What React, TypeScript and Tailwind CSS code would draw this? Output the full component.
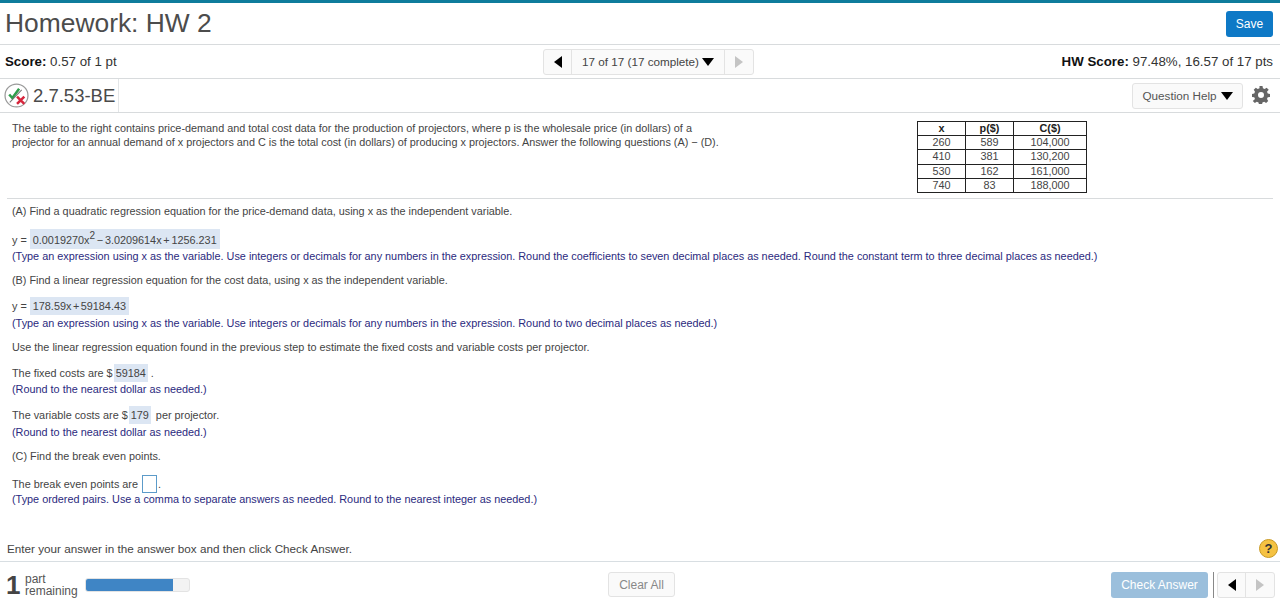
const Tri = ({ dir, muted }: { dir: 'left' | 'right' | 'down'; muted?: boolean }) => {
  const points = dir === 'left' ? '9,0 9,12 1,6' : dir === 'right' ? '1,0 1,12 9,6' : '0,1 12,1 6,9';
  return (
    <svg viewBox={dir === 'down' ? '0 0 12 10' : '0 0 10 12'} className={dir === 'down' ? 'w-[12px] h-[10px]' : 'w-[10px] h-[12px]'}>
      <polygon points={points} fill={muted ? '#c4c4c4' : '#000'} />
    </svg>
  );
};

const Filled = ({ children, className = '' }: { children: React.ReactNode; className?: string }) => (
  <span className={`inline-block bg-[#dce6f3] px-[2px] h-[18px] leading-[18px] text-[#444] ${className}`}>{children}</span>
);

const Note = ({ children, className }: { children: React.ReactNode; className: string }) => (
  <p className={`h-[16px] leading-[16px] text-[#2b2a7e] ${className}`}>{children}</p>
);

const Line = ({ children, className }: { children: React.ReactNode; className: string }) => (
  <p className={`h-[16px] leading-[16px] text-[#444] ${className}`}>{children}</p>
);

const ROWS = [
  ['260', '589', '104,000'],
  ['410', '381', '130,200'],
  ['530', '162', '161,000'],
  ['740', '83', '188,000'],
];

export default function App() {
  return (
    <div className="w-[1280px] h-[607px] overflow-hidden bg-white font-['Liberation_Sans',Arial,sans-serif] flex flex-col">
      <div className="h-[3px] bg-[#0f7c9c]" />

      <header className="h-[42px] flex items-center justify-between border-b border-[#d8dbdd] pl-[5px] pr-[7px]">
        <h1 className="text-[26.4px] leading-none text-[#4c4c4c]">Homework: HW 2</h1>
        <button className="w-[47px] h-[26px] rounded-[3px] bg-[#0e79c6] text-white text-[12px]">Save</button>
      </header>

      <div className="h-[34px] shrink-0 flex items-center border-b border-[#d8dbdd] pl-[5px] pr-[7px] text-[13.3px] text-[#333]">
        <div className="w-[538px]">
          <b className="text-[#111]">Score:</b> 0.57 of 1 pt
        </div>
        <div className="h-[26px] w-[211px] flex border border-[#e3e3e3] rounded-[3px] bg-[#fafafa] text-[11.7px] text-[#444]">
          <div className="w-[28px] flex items-center justify-center border-r border-[#e3e3e3]"><Tri dir="left" /></div>
          <div className="w-[153px] flex items-center justify-center gap-[3px] border-r border-[#e3e3e3]">
            17 of 17 (17 complete) <Tri dir="down" />
          </div>
          <div className="flex-1 flex items-center justify-center"><Tri dir="right" muted /></div>
        </div>
        <div className="ml-auto">
          <b className="text-[#111]">HW Score:</b> 97.48%, 16.57 of 17 pts
        </div>
      </div>

      <div className="h-[34px] shrink-0 flex items-center border-b border-[#d8dbdd] pl-[4px] pr-[10px]">
        <svg viewBox="0 0 24 24" className="w-[25px] h-[25px]">
          <circle cx="12" cy="12" r="11" fill="#fff" stroke="#9a9a9a" strokeWidth="1.2" />
          <path d="M5 11 L8 14.5 L14.5 5.5" fill="none" stroke="#2f9e4b" strokeWidth="2.4" />
          <path d="M5.500 18.500 L17 6.500" stroke="#777" strokeWidth="1" />
          <path d="M12.500 13 L19.500 20 M19.500 13 L12.500 20" stroke="#d7263d" strokeWidth="2.4" />
        </svg>
        <span className="ml-[4px] text-[18.5px] text-[#4a4a4a] w-[86px] h-[33px] leading-[33px] border-r border-[#e3e6e8] whitespace-nowrap">2.7.53-BE</span>
        <button className="ml-auto h-[26px] w-[111px] flex items-center justify-center gap-[4px] border border-[#e3e3e3] rounded-[3px] bg-[#fafafa] text-[11.7px] text-[#555]">
          Question Help <Tri dir="down" />
        </button>
        <svg viewBox="0 0 24 24" className="ml-[9px] -mt-[2px] w-[18px] h-[18px]" fill="#666">
          <path d="M10 1h4l.6 3 2.3 1 2.6-1.7 2.8 2.8L20 8.700l1 2.300 3 .6v4l-3 .4-1 2.300 1.600 2.600-2.800 2.800-2.600-1.700-2.300 1-.6 3h-4l-.6-3-2.300-1-2.600 1.700-2.800-2.800L4 18.300l-1-2.300-3-.4v-4l3-.6 1-2.300-1.700-2.600 2.800-2.800 2.600 1.700 2.300-1zM12 9a4 4 0 100 8 4 4 0 000-8z" fillRule="evenodd" transform="translate(0 -1)" />
        </svg>
      </div>

      <main className="flex-1 min-h-0 px-[12px] text-[10.85px]">
        <section className="flex justify-between h-[85px] pt-[8px] pr-[181px]">
          <div className="-mt-[1px]">
            <Line className="">The table to the right contains price-demand and total cost data for the production of projectors, where p is the wholesale price (in dollars) of a</Line>
            <Line className="-mt-[2px]">projector for an annual demand of x projectors and C is the total cost (in dollars) of producing x projectors. Answer the following questions (A) − (D).</Line>
          </div>
          <table className="h-[72px] w-[170px] table-fixed border-collapse border border-[#222] text-center text-[10.85px] text-[#444] leading-none">
            <thead className="text-[#222]">
              <tr className="h-[14px]">
                <th className="w-[48px] border border-[#222]">x</th>
                <th className="w-[48px] border border-[#222]">p($)</th>
                <th className="border border-[#222]">C($)</th>
              </tr>
            </thead>
            <tbody>
              {ROWS.map((row) => (
                <tr className="h-[14px]" key={row[0]}>
                  {row.map((cell) => (
                    <td className="border border-[#222]" key={cell}>{cell}</td>
                  ))}
                </tr>
              ))}
            </tbody>
          </table>
        </section>
        <hr className="-mx-[5px] border-[#d8dbdd]" />

        <Line className="mt-[4px]">(A) Find a quadratic regression equation for the price-demand data, using x as the independent variable.</Line>
        <p className="mt-[10px] h-[20px] leading-[20px] text-[#444]">
          y = <span className="inline-block bg-[#dce6f3] px-[3px] h-[20px] leading-[22px] [word-spacing:-1.25px]">0.0019270x<sup className="text-[10px]">2</sup> − 3.0209614x + 1256.231</span>
        </p>
        <Note className="-mt-[1px]">(Type an expression using x as the variable. Use integers or decimals for any numbers in the expression. Round the coefficients to seven decimal places as needed. Round the constant term to three decimal places as needed.)</Note>
        <Line className="mt-[8px]">(B) Find a linear regression equation for the cost data, using x as the independent variable.</Line>
        <p className="mt-[8px] h-[20px] leading-[20px] text-[#444]">
          y = <Filled className="px-[3px] [word-spacing:-1.5px]">178.59x + 59184.43</Filled>
        </p>
        <Note className="-mt-[1px]">(Type an expression using x as the variable. Use integers or decimals for any numbers in the expression. Round to two decimal places as needed.)</Note>
        <Line className="mt-[8px]">Use the linear regression equation found in the previous step to estimate the fixed costs and variable costs per projector.</Line>
        <p className="mt-[8px] h-[20px] leading-[20px] text-[#444]">
          The fixed costs are $ <Filled className="-ml-[2px]">59184</Filled> .
        </p>
        <Note className="-mt-[2px]">(Round to the nearest dollar as needed.)</Note>
        <p className="mt-[8px] h-[20px] leading-[20px] text-[#444]">
          The variable costs are $ <Filled className="-ml-[2px] mr-[2px]">179</Filled> per projector.
        </p>
        <Note className="-mt-[1px]">(Round to the nearest dollar as needed.)</Note>
        <Line className="mt-[8px]">(C) Find the break even points.</Line>
        <p className="mt-[10px] h-[20px] flex items-center text-[#444]">
          The break even points are
          <span className="mx-[4px] inline-block w-[15px] h-[18px] border border-[#5c9bc9]" />
          <span className="-ml-[3px]">.</span>
        </p>
        <Note className="-mt-[3px]">(Type ordered pairs. Use a comma to separate answers as needed. Round to the nearest integer as needed.)</Note>
      </main>

      <div className="h-[26px] shrink-0 flex items-center justify-between pl-[7px] pr-[2px] text-[11.7px] text-[#444] border-b border-[#d8dee2]">
        <span>Enter your answer in the answer box and then click Check Answer.</span>
        <span className="w-[19px] h-[19px] rounded-full bg-[#f5c242] border border-[#c99a24] flex items-center justify-center text-[13px] font-bold text-[#333]">?</span>
      </div>

      <footer className="h-[45px] shrink-0 flex items-center pl-[6px] pr-[5px]">
        <span className="w-[19px] text-[26px] font-bold text-[#444] leading-none">1</span>
        <span className="w-[60px] text-[12px] leading-[12px] text-[#555]">part<br />remaining</span>
        <div className="w-[105px] h-[14px] rounded-[3px] border border-[#e3e3e3] bg-[#f3f3f3] overflow-hidden">
          <div className="w-[87px] h-full bg-[#3f85c5]" />
        </div>
        <button className="ml-[418px] h-[25px] w-[67px] border border-[#e3e3e3] rounded-[3px] bg-[#fafafa] text-[12px] text-[#888]">Clear All</button>
        <button className="ml-auto h-[26px] w-[97px] rounded-[3px] bg-[#9bbfdc] text-[12px] text-white">Check Answer</button>
        <span className="ml-[5px] h-[26px] border-l border-[#888]" />
        <div className="ml-[3px] h-[26px] w-[58px] flex border border-[#e3e3e3] rounded-[3px] bg-[#fafafa]">
          <div className="w-[28px] flex items-center justify-center border-r border-[#e3e3e3]"><Tri dir="left" /></div>
          <div className="flex-1 flex items-center justify-center"><Tri dir="right" muted /></div>
        </div>
      </footer>
    </div>
  );
}
